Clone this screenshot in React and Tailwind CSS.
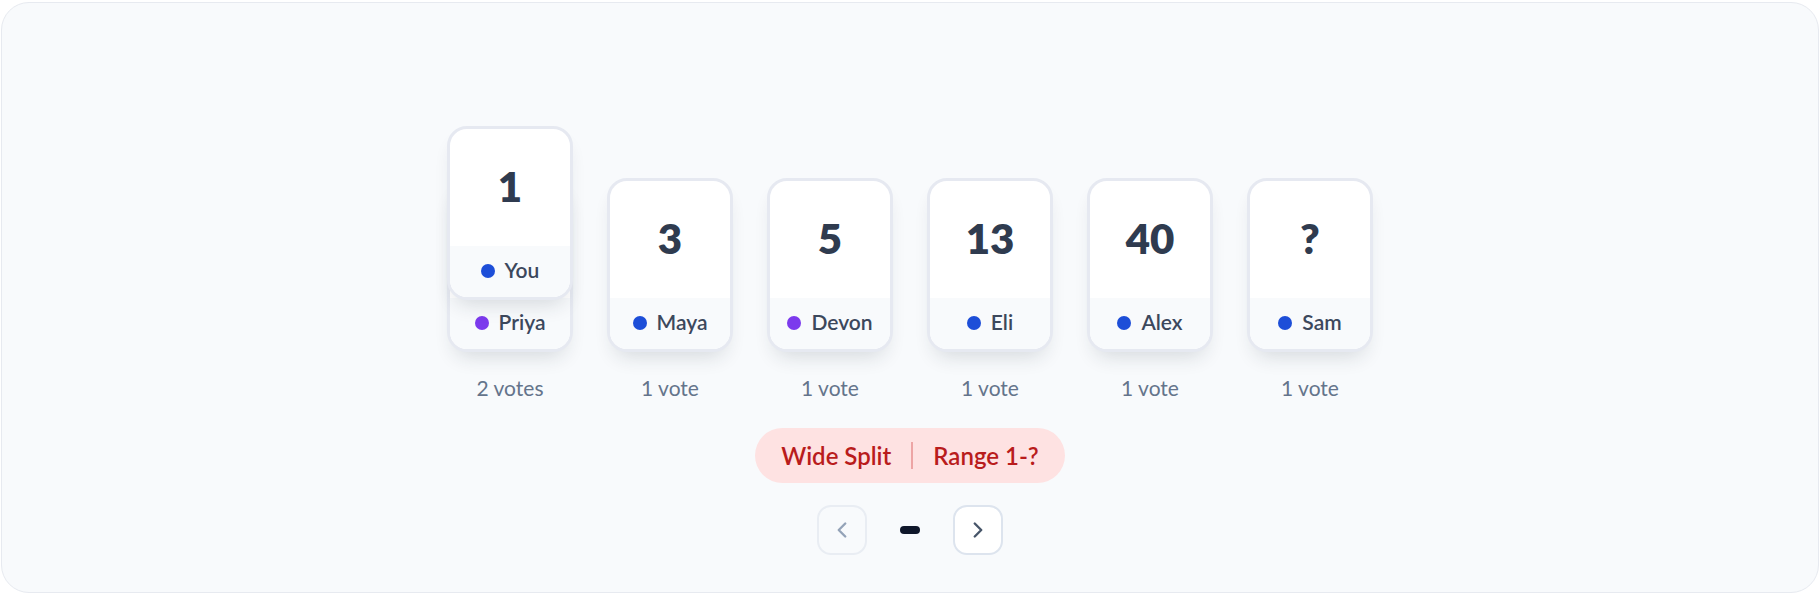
import React from "react";
import { ChevronLeft, ChevronRight } from "lucide-react";

const votes = [
  { value: "1", people: [{ name: "Priya", color: "bg-[#7c3aed]" }, { name: "You", color: "bg-[#1d4ed8]" }] },
  { value: "3", people: [{ name: "Maya", color: "bg-[#1d4ed8]" }] },
  { value: "5", people: [{ name: "Devon", color: "bg-[#7c3aed]" }] },
  { value: "13", people: [{ name: "Eli", color: "bg-[#1d4ed8]" }] },
  { value: "40", people: [{ name: "Alex", color: "bg-[#1d4ed8]" }] },
  { value: "?", people: [{ name: "Sam", color: "bg-[#1d4ed8]" }] },
];

function VoteCard({ value, person }) {
  return (
    <div className="w-[126px] h-[174px] rounded-[20px] border-[3px] border-[#e6e9f1] bg-white overflow-hidden flex flex-col shadow-[0_12px_20px_-8px_rgba(30,41,59,0.16)]">
      <div className="flex-1 flex items-center justify-center pb-[4px] text-[42px] font-extrabold text-[#2f3b4f] leading-none">
        {value}
      </div>
      <div className="h-[51px] bg-[#f8fafc] flex items-center justify-center gap-[10px] pb-[3px]">
        <span className={"w-[14px] h-[14px] rounded-full mt-[2px] " + person.color} />
        <span className="text-[21px] font-semibold text-[#3c485c]">{person.name}</span>
      </div>
    </div>
  );
}

function VoteColumn({ vote }) {
  const [bottom, ...stacked] = vote.people;
  const count = vote.people.length;
  return (
    <div className="flex flex-col items-center">
      <div className="relative">
        <VoteCard value={vote.value} person={bottom} />
        {/* extra voters on the same value fan upwards over the first card */}
        {stacked.map((p, i) => (
          <div key={p.name} className="absolute left-0" style={{ top: -(i + 1) * 52 }}>
            <VoteCard value={vote.value} person={p} />
          </div>
        ))}
      </div>
      <div className="mt-[22px] text-[21px] leading-[28px] text-[#64748b]">
        {count} {count === 1 ? "vote" : "votes"}
      </div>
    </div>
  );
}

export default function App() {
  return (
    <div
      className="h-[594px] w-full px-px pt-[2px] pb-px"
      style={{ fontFamily: "Lato, 'Noto Sans', sans-serif" }}
    >
      <div className="h-full rounded-[28px] border border-[#e7eaf0] bg-[#f8fafc] flex flex-col items-center pt-[175px]">
        <div className="flex gap-[34px]">
          {votes.map((v) => (
            <VoteColumn key={v.value} vote={v} />
          ))}
        </div>

        <div className="mt-[26px] h-[55px] rounded-full bg-[#fee2e2] px-[26px] flex items-center gap-[20px] text-[24px] font-semibold text-[#b91c1c]">
          <span>Wide Split</span>
          <span className="w-[2px] h-[27px] bg-[#eda5a5]" />
          <span>Range 1-?</span>
        </div>

        <div className="mt-[22px] flex items-center gap-[33px]">
          <button className="w-[50px] h-[50px] rounded-[14px] border-2 border-[#e9edf3] bg-[#f8fafc] flex items-center justify-center text-[#94a3b8]">
            <ChevronLeft size={26} strokeWidth={2.2} />
          </button>
          <span className="w-[20px] h-[8px] rounded-full bg-[#0f172a]" />
          <button className="w-[50px] h-[50px] rounded-[14px] border-2 border-[#dde4ee] bg-white flex items-center justify-center text-[#475569]">
            <ChevronRight size={26} strokeWidth={2.2} />
          </button>
        </div>
      </div>
    </div>
  );
}
